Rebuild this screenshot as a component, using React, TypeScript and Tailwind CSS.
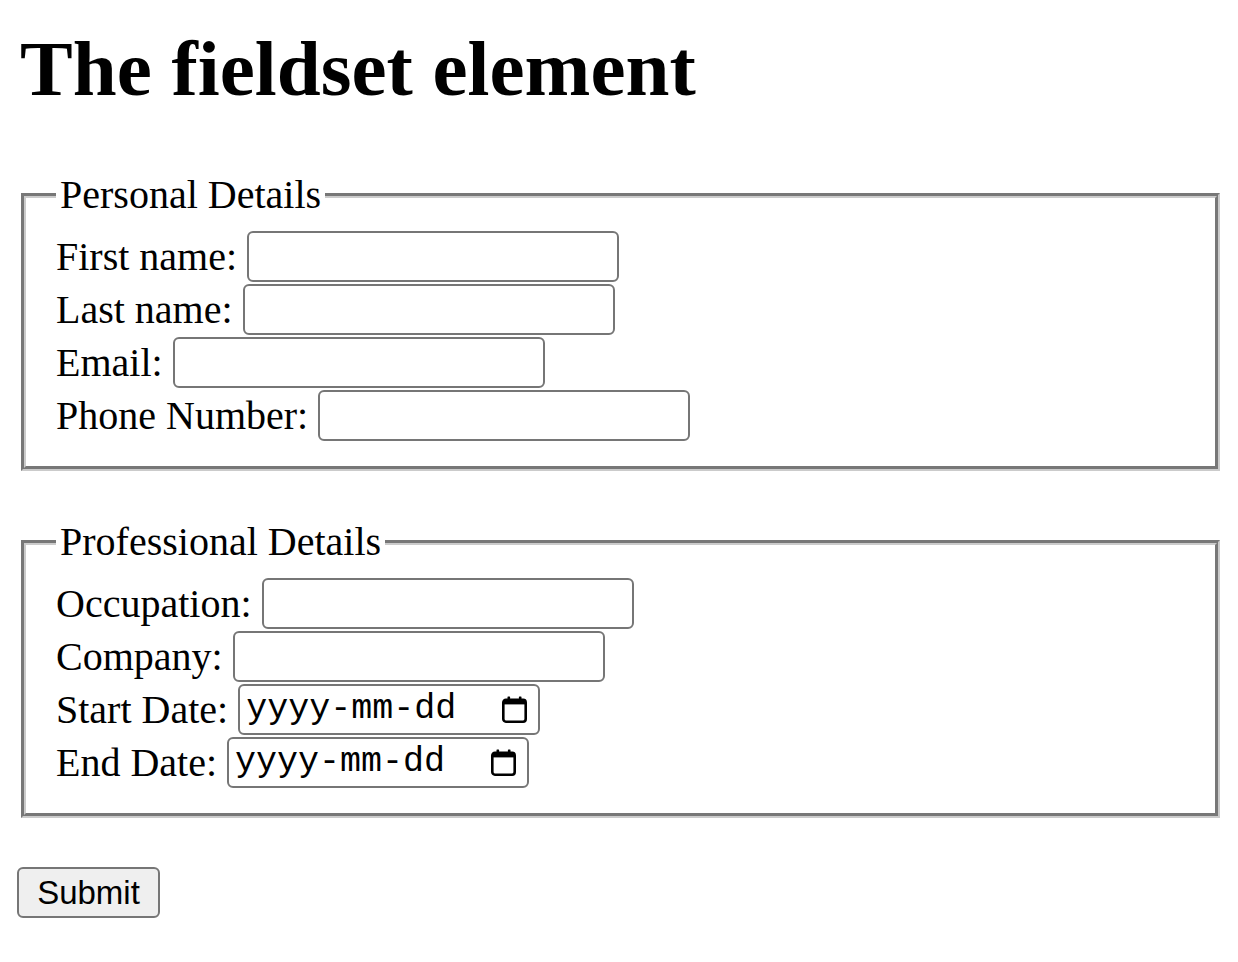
import React from "react";

const serif = "font-['Liberation_Serif','Times_New_Roman',serif]";

function CalendarIcon() {
    return (
        <svg width="25" height="27" viewBox="0 0 25 27" aria-hidden="true">
            <rect x="5.5" y="0.5" width="2.6" height="5" rx="0.6" fill="#000" />
            <rect x="16.9" y="0.5" width="2.6" height="5" rx="0.6" fill="#000" />
            <rect x="1.3" y="3.8" width="22.4" height="21.9" rx="2.6" fill="none" stroke="#000" strokeWidth="2.6" />
            <rect x="1.3" y="3.8" width="22.4" height="4.6" fill="#000" />
        </svg>
    );
}

function TextRow({ label }: { label: string }) {
    return (
        <div className="flex items-center gap-[10px] h-[53px]">
            <label className="whitespace-nowrap">{label}</label>
            <input
                type="text"
                className="w-[372px] h-[51px] border-2 border-[#767676] rounded-[6px] bg-white outline-none"
            />
        </div>
    );
}

function DateRow({ label }: { label: string }) {
    return (
        <div className="flex items-center gap-[10px] h-[53px]">
            <label className="whitespace-nowrap">{label}</label>
            <div className="w-[302px] h-[51px] border-2 border-[#767676] rounded-[6px] bg-white flex items-center justify-between pl-[6px] pr-[11px]">
                <span className="font-['Liberation_Mono','Courier_New',monospace] text-[35px] leading-none text-black">yyyy-mm-dd</span>
                <CalendarIcon />
            </div>
        </div>
    );
}

function Group({ title, children, className }: { title: string; children: React.ReactNode; className?: string }) {
    return (
        <fieldset className={"ml-[1px] mr-[-2px] border-[5px] [border-style:groove] border-[#cbcbcb] pl-[30px] pr-[30px] pt-[12px] pb-[24px] " + (className ?? "")}>
            <legend className="px-[4px] leading-[46px]">{title}</legend>
            {children}
        </fieldset>
    );
}

export default function App() {
    return (
        <div className={`min-h-screen bg-white text-black px-[20px] pt-[29px] ${serif}`}>
            <h1 className="text-[79px] font-bold leading-none">The fieldset element</h1>

            <form className="text-[40px]" onSubmit={(e) => e.preventDefault()}>
                <Group title="Personal Details" className="mt-[64px]">
                    <TextRow label="First name:" />
                    <TextRow label="Last name:" />
                    <TextRow label="Email:" />
                    <TextRow label="Phone Number:" />
                </Group>

                <Group title="Professional Details" className="mt-[48px]">
                    <TextRow label="Occupation:" />
                    <TextRow label="Company:" />
                    <DateRow label="Start Date:" />
                    <DateRow label="End Date:" />
                </Group>

                <button
                    type="submit"
                    className="block mt-[49px] ml-[-3px] w-[143px] h-[51px] bg-[#efefef] border-2 border-[#767676] rounded-[6px] font-['Liberation_Sans',Arial,sans-serif] text-[33px] leading-none text-black"
                >
                    Submit
                </button>
            </form>
        </div>
    );
}
